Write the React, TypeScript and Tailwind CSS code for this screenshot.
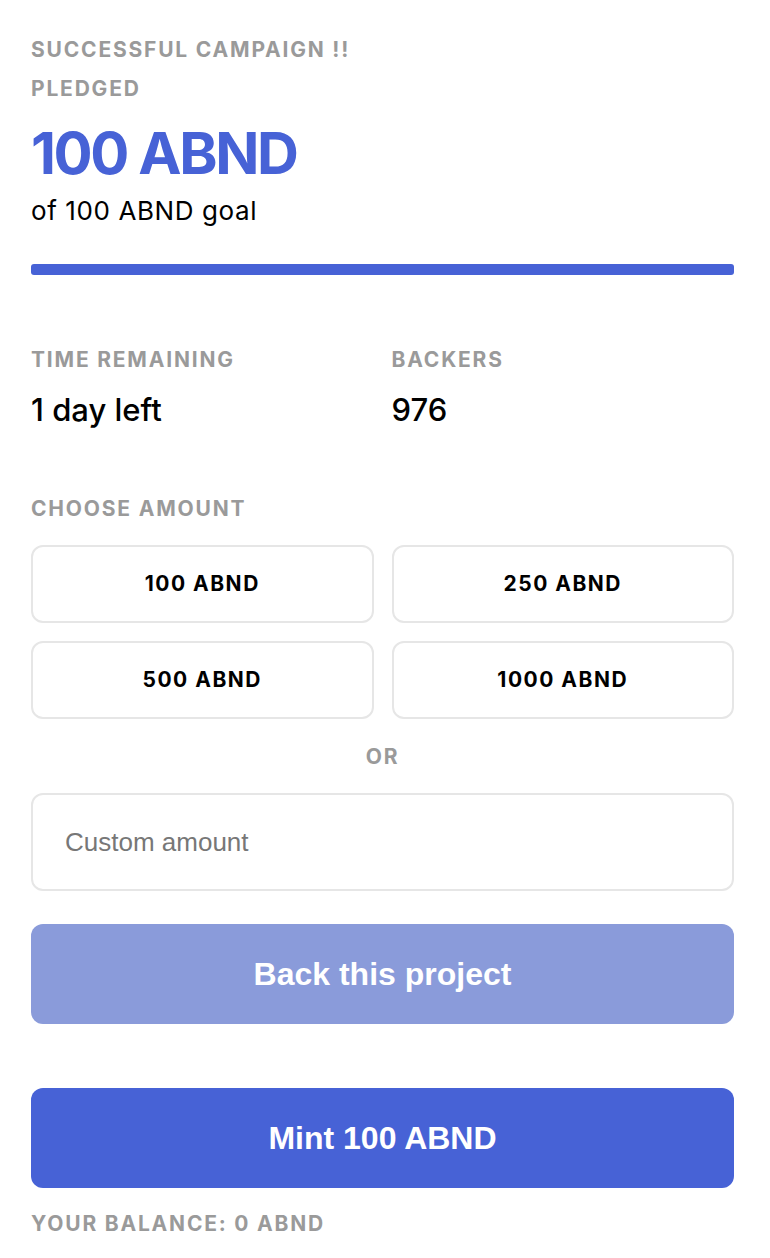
import React from 'react';

const amounts = ['100 ABND', '250 ABND', '500 ABND', '1000 ABND'];

const Label = ({ children, className = '' }: { children: React.ReactNode; className?: string }) => (
  <p className={`text-[21px] font-bold uppercase tracking-[1.8px] text-[#9a9a9a] leading-[28px] ${className}`}>{children}</p>
);

export default function App() {
  return (
    <div className="min-h-screen bg-white pl-[31px] pr-[36px] pt-[36px] pb-6 font-['Inter',sans-serif]">
      <Label>Successful Campaign !!</Label>
      <Label className="mt-[11px]">Pledged</Label>

      <h1 className="mt-[14px] text-[58px] font-bold leading-[72px] text-[#4762d6] tracking-[-2.4px]">100 ABND</h1>
      <p className="mt-[6px] text-[26px] leading-[32px] tracking-[0.6px] text-black">of 100 ABND goal</p>

      <div className="mt-[37px] h-[11px] w-full rounded-[3px] bg-[#4762d6]" />

      <div className="mt-[71px] grid grid-cols-2 gap-x-[18px]">
        <div>
          <Label>Time Remaining</Label>
          <p className="mt-[18px] text-[31px] font-medium leading-[36px] text-black">1 day left</p>
        </div>
        <div>
          <Label>Backers</Label>
          <p className="mt-[18px] text-[31px] font-medium leading-[36px] text-black">976</p>
        </div>
      </div>

      <Label className="mt-[67px]">Choose Amount</Label>
      <div className="mt-[22px] grid grid-cols-2 gap-[18px]">
        {amounts.map((a) => (
          <button
            key={a}
            className="h-[78px] rounded-[12px] border-2 border-[#e6e6e6] bg-white text-[21px] font-bold tracking-[1.5px] text-black"
          >
            {a}
          </button>
        ))}
      </div>

      <p className="mt-[24px] text-center text-[21px] font-bold leading-[28px] tracking-[1.8px] text-[#9a9a9a]">OR</p>

      <input
        placeholder="Custom amount"
        className="mt-[22px] block h-[98px] w-full rounded-[12px] border-2 border-[#e6e6e6] px-[32px] font-['Liberation_Sans',sans-serif] text-[26px] text-black outline-none placeholder:text-[#777]"
      />

      <button className="mt-[33px] h-[100px] w-full rounded-[12px] bg-[#8a9bda] font-['Liberation_Sans',sans-serif] text-[32px] font-bold text-white">
        Back this project
      </button>

      <button className="mt-[64px] h-[100px] w-full rounded-[12px] bg-[#4762d6] font-['Liberation_Sans',sans-serif] text-[32px] font-bold text-white">
        Mint 100 ABND
      </button>

      <p className="mt-[22px] text-[21px] font-bold uppercase leading-[28px] tracking-[1.8px] text-[#9a9a9a]">Your Balance: 0 ABND</p>
    </div>
  );
}
